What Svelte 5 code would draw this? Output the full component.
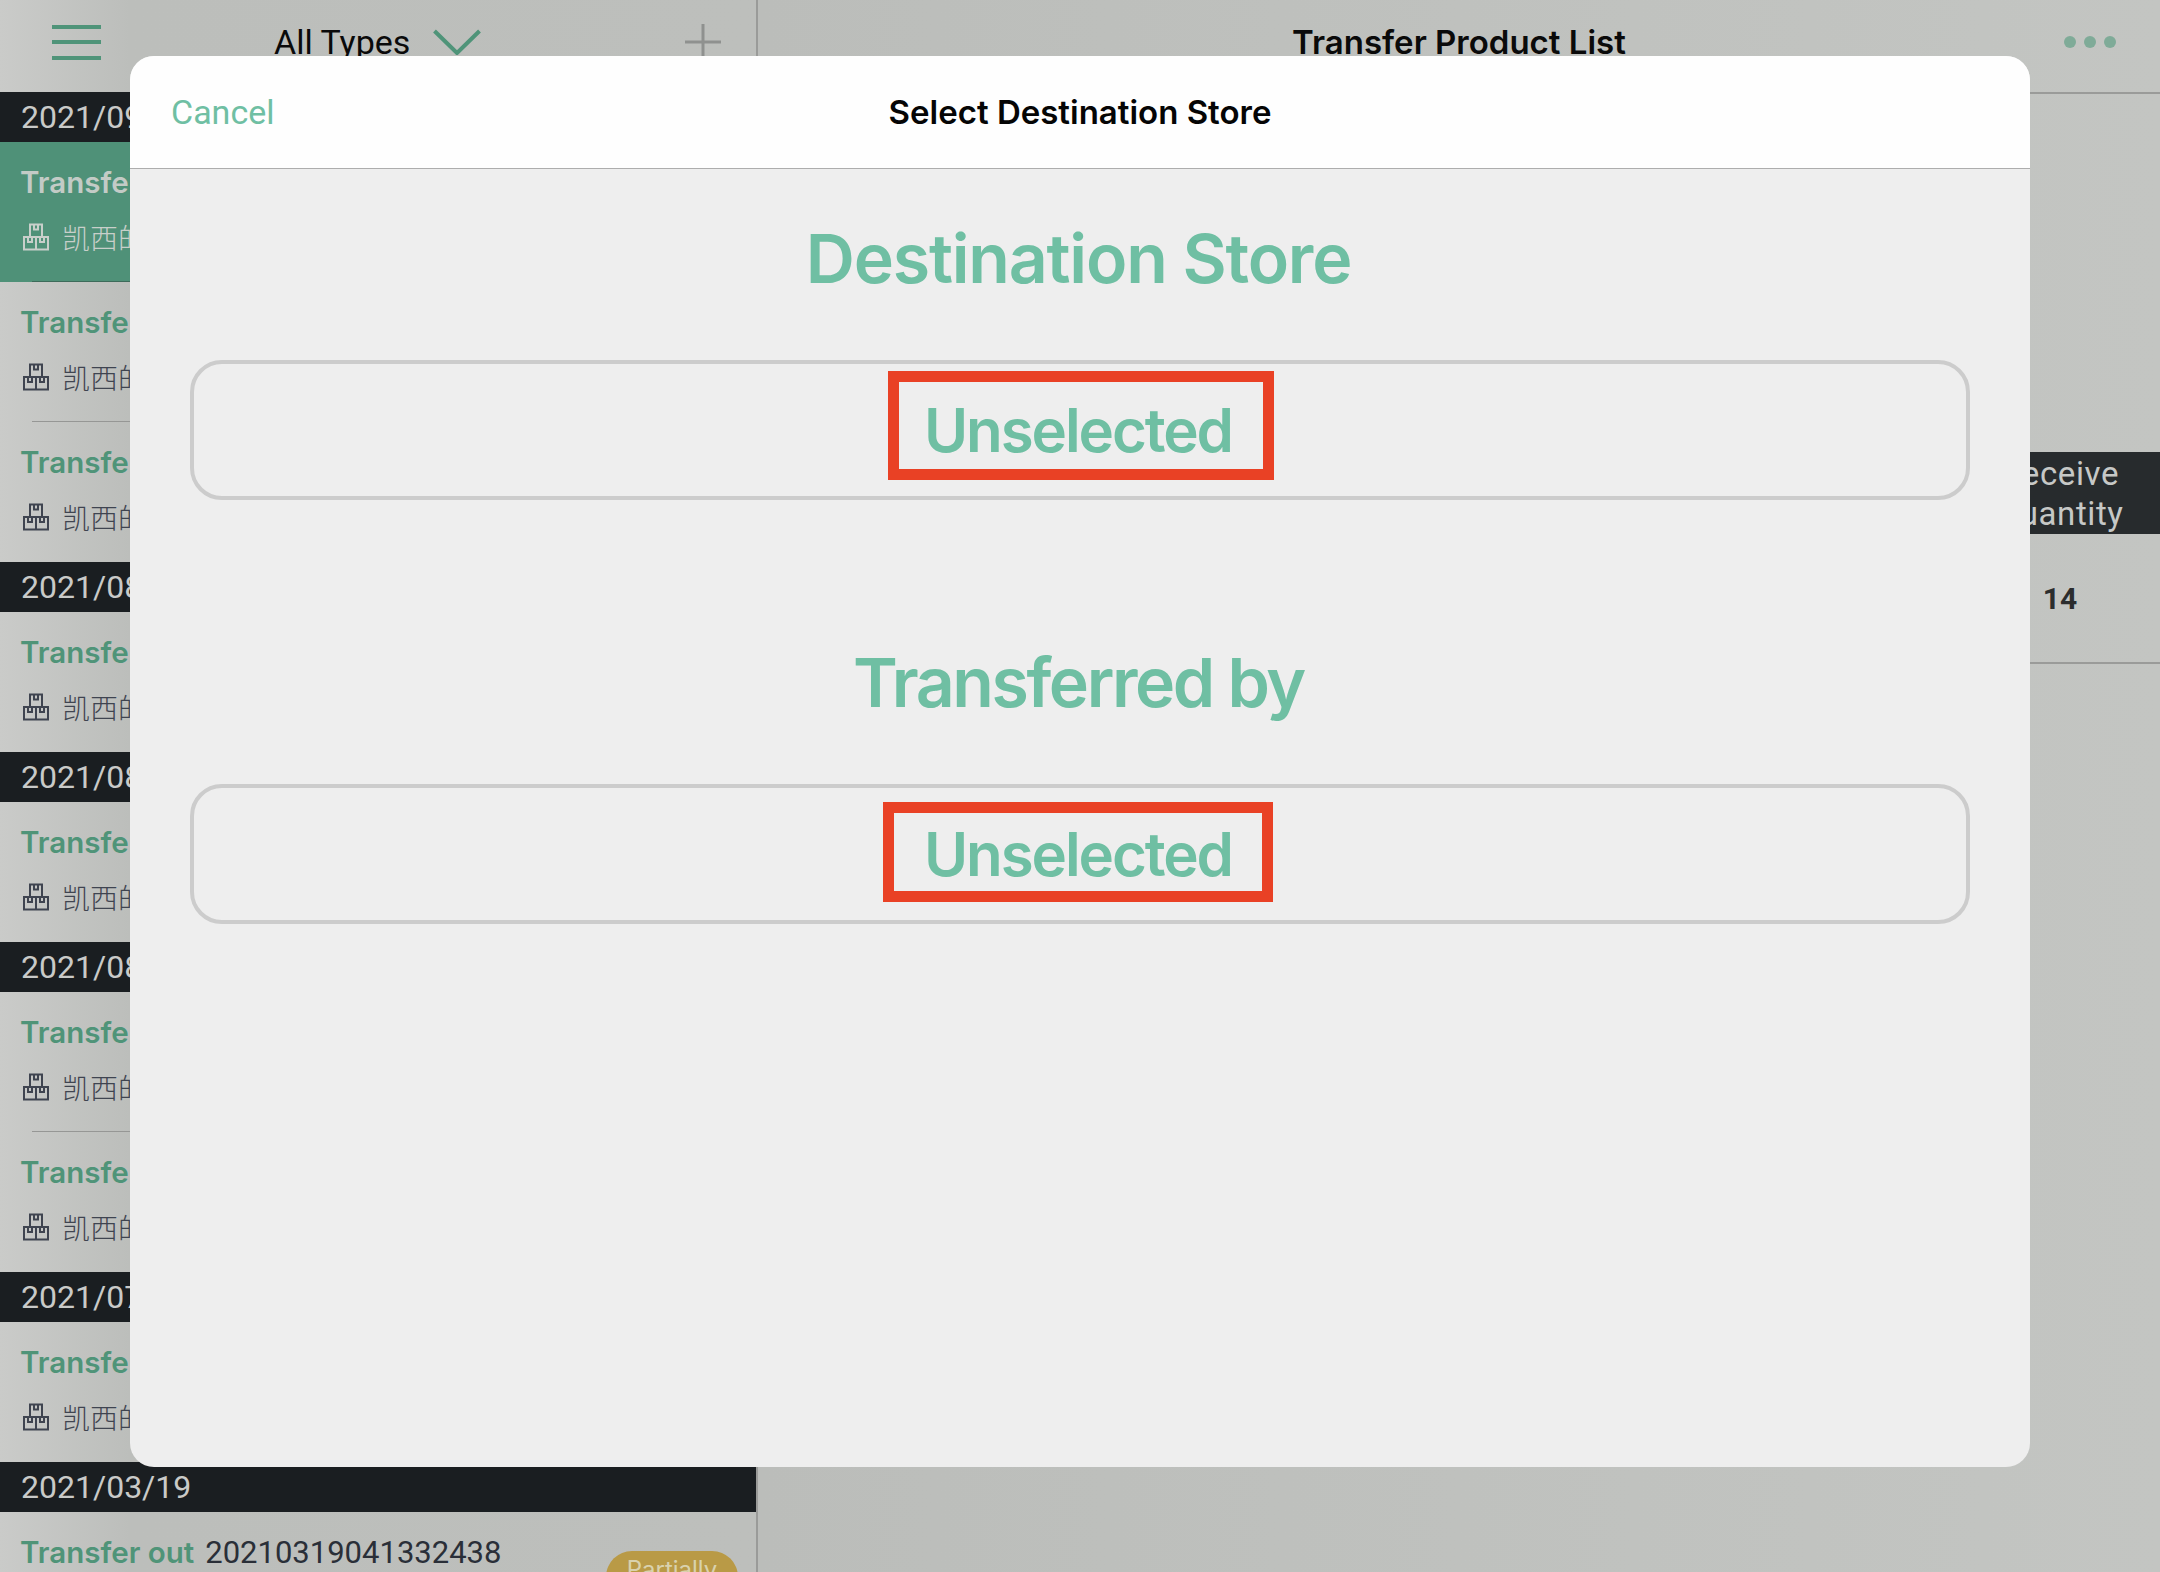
<script>
  const groups = [
    { date: '2021/09/28', rows: [{ id: '20210928041332438', active: true }, { id: '20210927041332438' }, { id: '20210926041332438' }] },
    { date: '2021/08/30', rows: [{ id: '20210830041332438' }] },
    { date: '2021/08/16', rows: [{ id: '20210816041332438' }] },
    { date: '2021/08/02', rows: [{ id: '20210802041332438' }, { id: '20210802041332439' }] },
    { date: '2021/07/12', rows: [{ id: '20210712041332438' }] }
  ];
</script>

<div class="page">
  <aside class="left">
    <header class="lhead">
      <div class="burger"><i></i><i></i><i></i></div>
      <div class="types">
        <span>All Types</span>
        <svg width="48" height="26" viewBox="0 0 48 26"><path d="M1.5 2 L24 24 L46.5 2" fill="none" stroke="#4f9479" stroke-width="4"/></svg>
      </div>
      <svg class="plus" width="36" height="36" viewBox="0 0 36 36"><path d="M18 0V36M0 18H36" stroke="#8f918f" stroke-width="3"/></svg>
    </header>

    {#each groups as g}
      <div class="date">{g.date}</div>
      {#each g.rows as r, i}
        <div class="row" class:active={r.active}>
          <div class="line1"><b>Transfer out</b><span>{r.id}</span></div>
          <div class="line2">
            <svg width="28" height="28" viewBox="0 0 28 28" fill="none" stroke="currentColor" stroke-width="2">
              <path d="M8 1.5h12v12.5H8zM12 1.5v5h4v-5M2 14h24v12.5H2zM14 14v12.5M6 14v5h4v-5M18 14v5h4v-5"/>
            </svg>
            <span>凯西的店</span>
          </div>
          {#if i < g.rows.length - 1 || r.active}<div class="rule"></div>{/if}
        </div>
      {/each}
    {/each}
    <div class="date">2021/03/19</div>
    <div class="row">
      <div class="line1"><b>Transfer out</b><span>20210319041332438</span><em class="badge">Partially</em></div>
    </div>
  </aside>

  <main class="right">
    <header class="rhead">
      <h1>Transfer Product List</h1>
      <div class="dots"><i></i><i></i><i></i></div>
    </header>
    <div class="thead"><div class="col">Receive<br />Quantity</div></div>
    <div class="trow"><div class="col num">14</div></div>
  </main>

  <section class="modal">
    <header class="mhead">
      <span class="cancel">Cancel</span>
      <h2>Select Destination Store</h2>
    </header>
    <div class="mbody">
      <h3 class="dest">Destination Store</h3>
      <div class="box"><span class="val">Unselected</span><div class="mark mark-a"></div></div>
      <h3 class="second">Transferred by</h3>
      <div class="box"><span class="val">Unselected</span><div class="mark mark-b"></div></div>
    </div>
  </section>
</div>

<style>
  :global(body) { margin: 0; }
  .page {
    position: relative;
    width: 2160px;
    height: 1572px;
    overflow: hidden;
    display: flex;
    font-family: Inter, "Noto Sans CJK SC", sans-serif;
    background: #bfc0be;
  }
  .left {
    width: 756px;
    flex: none;
    border-right: 2px solid #9a9b99;
    background: linear-gradient(90deg, #cacbc9 0, #bcbebb 130px, #bdbfbc 100%);
  }
  .lhead {
    height: 92px;
    position: relative;
    display: flex;
    align-items: center;
    justify-content: space-between;
    padding: 0 35px 8px 52px;
    box-sizing: border-box;
  }
  .burger { display: flex; flex-direction: column; gap: 11.5px; width: 49px; }
  .burger i { display: block; height: 4px; background: #4f9479; }
  .types {
    display: flex;
    align-items: center;
    gap: 23px;
    font-size: 34px;
    color: #0a0a0a;
    font-family: Roboto, sans-serif;
    white-space: nowrap;
    margin-left: 173px;
    margin-right: auto;
  }
  .date {
    height: 50px;
    line-height: 50px;
    background: #1a1e21;
    color: #c9cac8;
    padding-left: 21px;
    font-size: 32px;
    font-family: Roboto, sans-serif;
  }
  .row {
    height: 140px;
    position: relative;
    box-sizing: border-box;
    padding: 18px 0 0 20px;
  }
  .row.active { background: #4f9178; }
  .line1 { display: flex; align-items: center; gap: 11px; height: 44px; white-space: nowrap; }
  .line1 b { font-size: 29.5px; font-weight: 600; color: #4f9478; }
  .line1 span { font-size: 31px; color: #2a2f38; font-family: Roboto, sans-serif; }
  .active .line1 b { color: #c3cbc6; }
  .active .line1 span { color: #c3cbc6; }
  .line2 {
    display: flex;
    align-items: center;
    gap: 12px;
    margin-top: 11px;
    height: 44px;
    color: #3f4450;
    font-size: 28px;
    font-weight: 300;
    padding-left: 2px;
    white-space: nowrap;
  }
  .active .line2 { color: #c8cfca; }
  .rule { position: absolute; left: 32px; right: 0; bottom: 0; height: 1.5px; background: #969795; }
  .active .rule { background: #3d6b5a; }
  .badge {
    margin-left: auto;
    margin-right: 18px;
    width: 132px;
    height: 70px;
    margin-top: 68px;
    background: #b99a46;
    border-radius: 26px;
    color: #d9d2ae;
    font-style: normal;
    font-size: 24px;
    text-align: center;
    line-height: 36px;
    padding-top: 1px;
    box-sizing: border-box;
  }
  .right {
    flex: 1;
    min-width: 0;
    background: linear-gradient(90deg, #bbbdba 0, #c3c5c2 100%);
  }
  .rhead {
    height: 94px;
    border-bottom: 2px solid #9a9b99;
    box-sizing: border-box;
    display: flex;
    align-items: center;
    justify-content: center;
    position: relative;
    padding-bottom: 8px;
  }
  h1 {
    margin: 0;
    font-size: 33px;
    font-weight: 600;
    color: #0a0a0a;
    white-space: nowrap;
  }
  .dots { position: absolute; right: 44px; top: 36px; display: flex; gap: 8px; }
  .dots i { display: block; width: 12px; height: 12px; border-radius: 50%; background: #7fab98; }
  .thead {
    margin-top: 358px;
    height: 82px;
    padding-top: 2px;
    box-sizing: border-box;
    background: #272b2d;
    color: #c6c8c6;
    display: flex;
    justify-content: flex-end;
    font-family: Roboto, sans-serif;
    font-size: 33px;
    line-height: 40px;
    letter-spacing: 0.6px;
    align-items: center;
  }
  .col { width: 200px; text-align: center; }
  .trow {
    height: 130px;
    border-bottom: 2px solid #9a9b99;
    display: flex;
    justify-content: flex-end;
    align-items: center;
    box-sizing: border-box;
  }
  .num { font-family: Roboto, sans-serif; font-weight: 700; font-size: 30px; color: #2b2d2e; }
  .modal {
    position: absolute;
    left: 130px;
    top: 56px;
    width: 1900px;
    height: 1411px;
    border-radius: 24px;
    overflow: hidden;
    background: #eeeeee;
    display: flex;
    flex-direction: column;
  }
  .mhead {
    height: 113px;
    flex: none;
    box-sizing: border-box;
    border-bottom: 1.5px solid #adadad;
    background: #fefefe;
    display: flex;
    align-items: center;
    justify-content: center;
    position: relative;
  }
  .cancel { position: absolute; left: 41px; top: 36px; font-size: 34px; font-family: Roboto, sans-serif; color: #6fbfa3; line-height: 40px; }
  h2 { margin: 0; font-size: 33px; font-weight: 600; color: #050505; }
  .mbody { padding: 49px 60px 0; }
  h3 {
    margin: 0 0 62px;
    padding-right: 3px;
    text-align: center;
    font-size: 68px;
    line-height: 80px;
    font-weight: 600;
    color: #6fbfa3;
  }
  h3.dest { letter-spacing: -1.2px; }
  h3.second { margin: 142px 0 62px; letter-spacing: -2.4px; }
  .box {
    position: relative;
    height: 140px;
    box-sizing: border-box;
    border: 4px solid #cccccc;
    border-radius: 32px;
    display: flex;
    align-items: center;
    justify-content: center;
    font-size: 60px;
    font-weight: 600;
    letter-spacing: -2.1px;
    color: #6fbfa3;
  }
  .val { margin-left: -4px; }
  .mark { position: absolute; box-sizing: border-box; border: 11px solid #e94125; }
  .mark-a { left: 694px; top: 7px; width: 386px; height: 109px; }
  .mark-b { left: 689px; top: 14px; width: 390px; height: 100px; }
</style>
